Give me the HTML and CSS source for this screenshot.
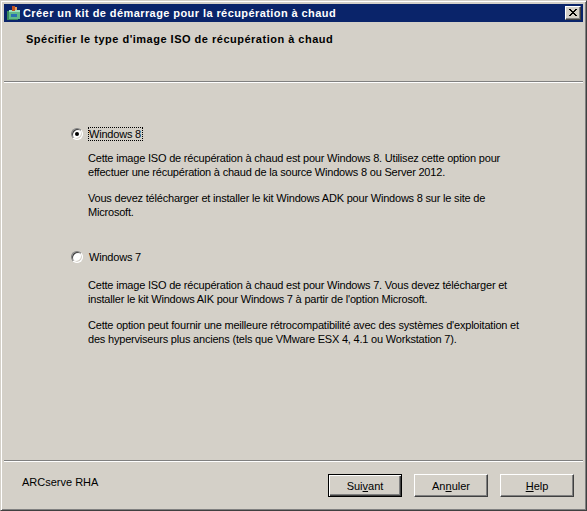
FILE: index.html
```html
<!DOCTYPE html>
<html lang="fr">
<head>
<meta charset="utf-8">
<title>Créer un kit de démarrage</title>
<link rel="stylesheet" href="styles.css">
</head>
<body>
<div class="window">
  <div class="titlebar">
    <svg class="app-icon" width="16" height="16" viewBox="0 0 16 16">
      <rect x="1" y="6" width="11" height="9" fill="#3a8a5a"/>
      <rect x="3" y="5" width="11" height="9" fill="#5fb98a"/>
      <rect x="3" y="5" width="11" height="2" fill="#9fe0c0"/>
      <rect x="6" y="1" width="3" height="5" fill="#c05020"/>
      <rect x="9" y="2" width="2" height="3" fill="#e8a060"/>
      <rect x="5" y="9" width="6" height="3" fill="#2a6fb0"/>
    </svg>
    <span class="title-text">Créer un kit de démarrage pour la récupération à chaud</span>
    <span class="close-btn">
      <svg width="8" height="7" viewBox="0 0 8 7"><path d="M0 0h2v1h-2zM6 0h2v1h-2zM1 1h2v1h-2zM5 1h2v1h-2zM2 2h4v1h-4zM3 3h2v1h-2zM2 4h4v1h-4zM1 5h2v1h-2zM5 5h2v1h-2zM0 6h2v1h-2zM6 6h2v1h-2z" fill="#000"/></svg>
    </span>
  </div>
  <div class="header">
    <h1 class="header-title">Spécifier le type d'image ISO de récupération à chaud</h1>
  </div>
  <div class="content">
    <div class="option">
      <div class="option-row">
        <span class="radio checked"><span class="dot"></span></span>
        <span class="label focused">Windows 8</span>
      </div>
      <div class="desc">
        <p>Cette image ISO de récupération à chaud est pour Windows 8. Utilisez cette option pour<br>effectuer une récupération à chaud de la source Windows 8 ou Server 2012.</p>
        <p>Vous devez télécharger et installer le kit Windows ADK pour Windows 8 sur le site de<br>Microsoft.</p>
      </div>
    </div>
    <div class="option second">
      <div class="option-row">
        <span class="radio"></span>
        <span class="label">Windows 7</span>
      </div>
      <div class="desc">
        <p>Cette image ISO de récupération à chaud est pour Windows 7. Vous devez télécharger et<br>installer le kit Windows AIK pour Windows 7 à partir de l'option Microsoft.</p>
        <p>Cette option peut fournir une meilleure rétrocompatibilité avec des systèmes d'exploitation et<br>des hyperviseurs plus anciens (tels que VMware ESX 4, 4.1 ou Workstation 7).</p>
      </div>
    </div>
  </div>
  <div class="footer">
    <span class="brand">ARCserve RHA</span>
    <div class="buttons">
      <button class="btn default">Sui<u>v</u>ant</button>
      <button class="btn">An<u>n</u>uler</button>
      <button class="btn"><u>H</u>elp</button>
    </div>
  </div>
</div>
</body>
</html>
```

FILE: styles.css
```css
* { box-sizing: border-box; }
html, body {
  margin: 0;
  padding: 0;
  background: #d4d0c8;
}
body {
  font-family: "Liberation Sans", Arial, sans-serif;
  font-size: 11px;
  color: #000;
}
.window {
  width: 587px;
  height: 511px;
  background: #d4d0c8;
  border-top: 1px solid #d4d0c8;
  border-left: 1px solid #d4d0c8;
  border-right: 1px solid #404040;
  border-bottom: 1px solid #404040;
  box-shadow: inset 1px 1px 0 #ffffff, inset -1px -1px 0 #808080;
  padding: 3px;
  display: flex;
  flex-direction: column;
}
.titlebar {
  height: 18px;
  background: #0a246a;
  display: flex;
  align-items: center;
  padding: 0 2px 0 2px;
  color: #fff;
}
.app-icon { flex: none; margin-right: 1px; }
.title-text {
  font-weight: bold;
  font-size: 11px;
  flex: 1;
  white-space: nowrap;
  letter-spacing: 0.42px;
}
.close-btn {
  width: 16px;
  height: 14px;
  background: #d4d0c8;
  border-top: 1px solid #fff;
  border-left: 1px solid #fff;
  border-right: 1px solid #404040;
  border-bottom: 1px solid #404040;
  box-shadow: inset -1px -1px 0 #808080;
  display: flex;
  align-items: center;
  justify-content: center;
  padding: 0 1px 1px 0;
}
.header {
  height: 60px;
  border-bottom: 1px solid #808080;
  box-shadow: 0 1px 0 #ffffff;
  padding: 11px 0 0 22px;
}
.header-title {
  margin: 0;
  font-size: 11px;
  font-weight: bold;
  letter-spacing: 0.5px;
}
.content {
  flex: 1;
  padding: 44px 0 0 67px;
}
.option-row {
  display: flex;
  align-items: center;
  height: 15px;
}
.radio {
  width: 12px;
  height: 12px;
  border-radius: 50%;
  background: #fff;
  border: 1px solid;
  border-color: #808080 #fff #fff #808080;
  box-shadow: inset 1px 1px 0 #404040, inset -1px -1px 0 #d4d0c8;
  display: flex;
  align-items: center;
  justify-content: center;
  margin-right: 5px;
  flex: none;
}
.radio .dot {
  width: 4px;
  height: 4px;
  border-radius: 50%;
  background: #000;
}
.label {
  padding: 0 1px 0 0;
  border: 1px solid transparent;
  line-height: 12px;
  letter-spacing: -0.2px;
}
.label.focused {
  border: 1px dotted #000;
}
.desc {
  padding: 10px 0 0 17px;
  letter-spacing: -0.2px;
}
.desc p {
  margin: 0 0 12px 0;
  line-height: 14px;
}
.option.second { margin-top: 30px; }
.option.second .desc { padding-top: 14px; }
.footer {
  height: 47px;
  border-top: 1px solid #808080;
  box-shadow: inset 0 1px 0 #ffffff;
  display: flex;
  align-items: flex-start;
  padding: 13px 9px 0 18px;
}
.brand { flex: 1; padding-top: 2px; }
.buttons { display: flex; gap: 12px; }
.btn {
  width: 74px;
  height: 23px;
  font-family: "Liberation Sans", Arial, sans-serif;
  font-size: 11px;
  background: #d4d0c8;
  color: #000;
  border-top: 1px solid #fff;
  border-left: 1px solid #fff;
  border-right: 1px solid #404040;
  border-bottom: 1px solid #404040;
  box-shadow: inset -1px -1px 0 #808080;
  padding: 0;
}
.btn.default {
  border: 1px solid #000;
  box-shadow: inset 1px 1px 0 #fff, inset -1px -1px 0 #404040, inset -2px -2px 0 #808080;
}
```
